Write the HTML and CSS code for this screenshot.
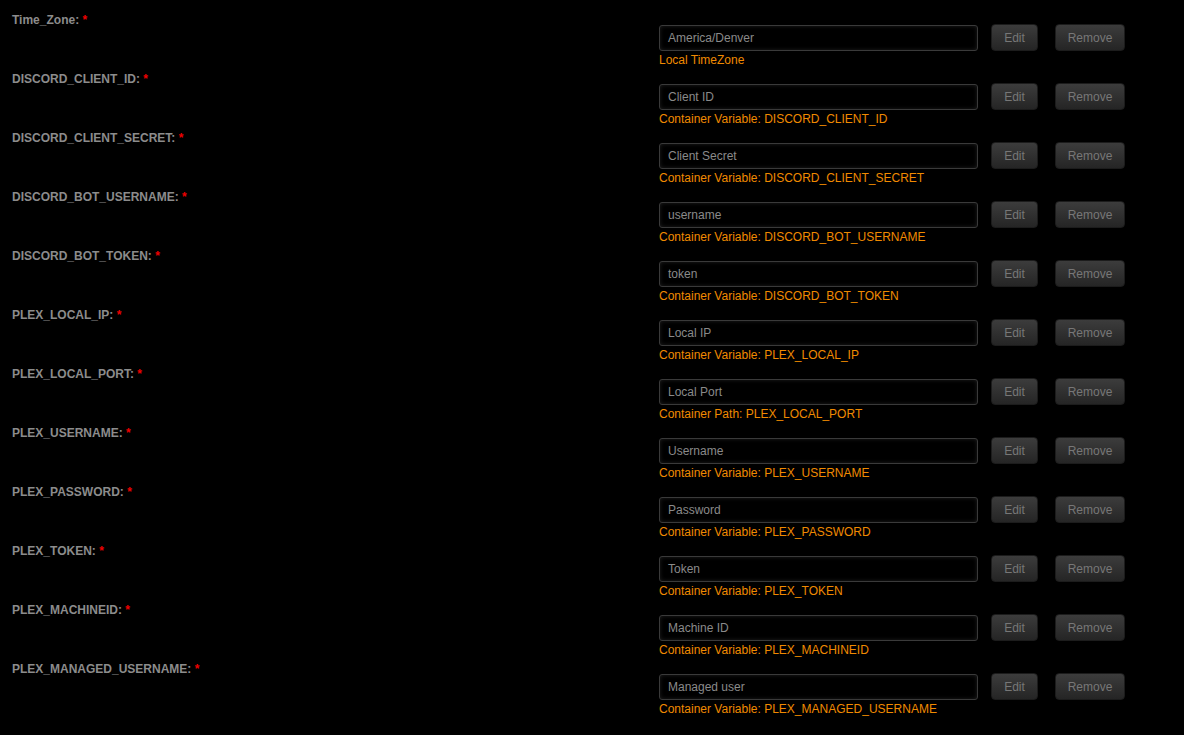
FILE: index.html
```html
<!DOCTYPE html>
<html>
<head>
<meta charset="utf-8">
<link rel="stylesheet" href="styles.css">
</head>
<body>
<div class="form">
  <div class="row">
    <div class="label">Time_Zone: <span class="req">*</span></div>
    <div class="field">
      <div class="controls"><div class="input">America/Denver</div><button class="btn edit">Edit</button><button class="btn remove">Remove</button></div>
      <div class="desc">Local TimeZone</div>
    </div>
  </div>
  <div class="row">
    <div class="label">DISCORD_CLIENT_ID: <span class="req">*</span></div>
    <div class="field">
      <div class="controls"><div class="input">Client ID</div><button class="btn edit">Edit</button><button class="btn remove">Remove</button></div>
      <div class="desc">Container Variable: DISCORD_CLIENT_ID</div>
    </div>
  </div>
  <div class="row">
    <div class="label">DISCORD_CLIENT_SECRET: <span class="req">*</span></div>
    <div class="field">
      <div class="controls"><div class="input">Client Secret</div><button class="btn edit">Edit</button><button class="btn remove">Remove</button></div>
      <div class="desc">Container Variable: DISCORD_CLIENT_SECRET</div>
    </div>
  </div>
  <div class="row">
    <div class="label">DISCORD_BOT_USERNAME: <span class="req">*</span></div>
    <div class="field">
      <div class="controls"><div class="input">username</div><button class="btn edit">Edit</button><button class="btn remove">Remove</button></div>
      <div class="desc">Container Variable: DISCORD_BOT_USERNAME</div>
    </div>
  </div>
  <div class="row">
    <div class="label">DISCORD_BOT_TOKEN: <span class="req">*</span></div>
    <div class="field">
      <div class="controls"><div class="input">token</div><button class="btn edit">Edit</button><button class="btn remove">Remove</button></div>
      <div class="desc">Container Variable: DISCORD_BOT_TOKEN</div>
    </div>
  </div>
  <div class="row">
    <div class="label">PLEX_LOCAL_IP: <span class="req">*</span></div>
    <div class="field">
      <div class="controls"><div class="input">Local IP</div><button class="btn edit">Edit</button><button class="btn remove">Remove</button></div>
      <div class="desc">Container Variable: PLEX_LOCAL_IP</div>
    </div>
  </div>
  <div class="row">
    <div class="label">PLEX_LOCAL_PORT: <span class="req">*</span></div>
    <div class="field">
      <div class="controls"><div class="input">Local Port</div><button class="btn edit">Edit</button><button class="btn remove">Remove</button></div>
      <div class="desc">Container Path: PLEX_LOCAL_PORT</div>
    </div>
  </div>
  <div class="row">
    <div class="label">PLEX_USERNAME: <span class="req">*</span></div>
    <div class="field">
      <div class="controls"><div class="input">Username</div><button class="btn edit">Edit</button><button class="btn remove">Remove</button></div>
      <div class="desc">Container Variable: PLEX_USERNAME</div>
    </div>
  </div>
  <div class="row">
    <div class="label">PLEX_PASSWORD: <span class="req">*</span></div>
    <div class="field">
      <div class="controls"><div class="input">Password</div><button class="btn edit">Edit</button><button class="btn remove">Remove</button></div>
      <div class="desc">Container Variable: PLEX_PASSWORD</div>
    </div>
  </div>
  <div class="row">
    <div class="label">PLEX_TOKEN: <span class="req">*</span></div>
    <div class="field">
      <div class="controls"><div class="input">Token</div><button class="btn edit">Edit</button><button class="btn remove">Remove</button></div>
      <div class="desc">Container Variable: PLEX_TOKEN</div>
    </div>
  </div>
  <div class="row">
    <div class="label">PLEX_MACHINEID: <span class="req">*</span></div>
    <div class="field">
      <div class="controls"><div class="input">Machine ID</div><button class="btn edit">Edit</button><button class="btn remove">Remove</button></div>
      <div class="desc">Container Variable: PLEX_MACHINEID</div>
    </div>
  </div>
  <div class="row">
    <div class="label">PLEX_MANAGED_USERNAME: <span class="req">*</span></div>
    <div class="field">
      <div class="controls"><div class="input">Managed user</div><button class="btn edit">Edit</button><button class="btn remove">Remove</button></div>
      <div class="desc">Container Variable: PLEX_MANAGED_USERNAME</div>
    </div>
  </div>
</div>
</body>
</html>
```
FILE: styles.css
```css
html, body {
  margin: 0;
  padding: 0;
  background: #000;
  font-family: "Liberation Sans", Arial, sans-serif;
  font-size: 12px;
}
.form {
  padding: 11px 0 0 12px;
}
.row {
  display: grid;
  grid-template-columns: 647px 1fr;
  margin-bottom: 2px;
}
.label {
  font-weight: bold;
  color: #8c8c8c;
  line-height: 16px;
  padding-top: 1px;
}
.req {
  color: #e00;
}
.field {
  padding-top: 14px;
}
.controls {
  display: flex;
  align-items: flex-start;
  height: 26px;
}
.input {
  box-sizing: border-box;
  width: 319px;
  height: 26px;
  border: 1px solid #3a3a3a;
  border-radius: 3px;
  background: #000;
  box-shadow: inset 0 0 4px rgba(255,255,255,0.12);
  color: #8a8a8a;
  padding-left: 8px;
  line-height: 24px;
  font-size: 12px;
}
.btn {
  box-sizing: border-box;
  height: 27px;
  margin-top: -1px;
  border: 1px solid #1c1c1c;
  border-radius: 4px;
  background: linear-gradient(#3c3c3c, #252525);
  color: #777;
  font-family: "Liberation Sans", Arial, sans-serif;
  font-size: 12px;
  padding: 0;
}
.edit {
  width: 47px;
  margin-left: 13px;
}
.remove {
  width: 70px;
  margin-left: 17px;
}
.desc {
  color: #f08a00;
  line-height: 16px;
  margin-top: 1px;
}
```
